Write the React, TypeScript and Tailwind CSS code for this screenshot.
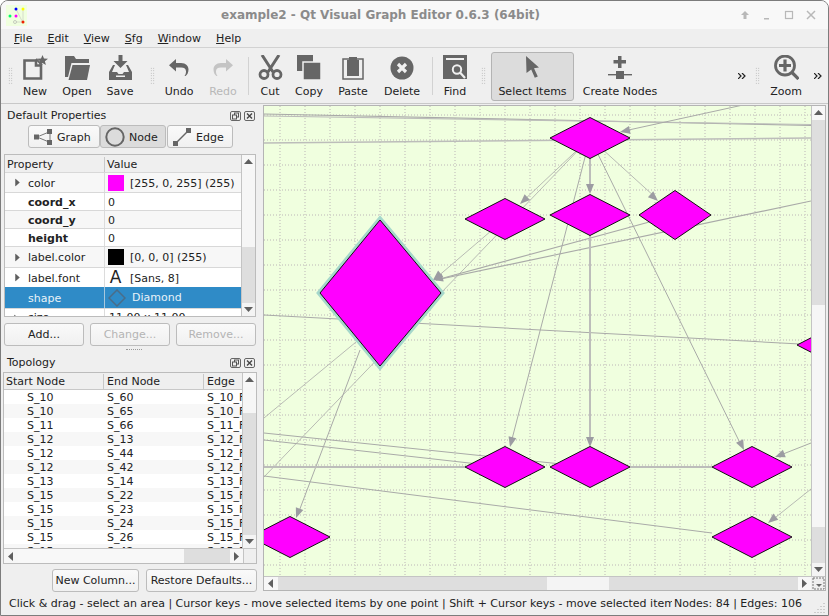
import type { ReactNode } from 'react';

/* toolbar glyphs */
const GREY = '#666666';

function NewIcon() {
  return (
    <svg width="25" height="25" viewBox="0 0 25 25">
      <path d="M1.500 5.500H13v5h5V23.500H1.500z" fill="none" stroke={GREY} strokeWidth="2.600" />
      <path d="M13 4l6 6" stroke={GREY} strokeWidth="2" />
      <path d="M19.500 0l1.500 3.500 4 .2-3.100 2.500 1 3.900-3.400-2.200-3.400 2.200 1-3.900L14 3.700l4-.2z" fill={GREY} />
    </svg>
  );
}

function OpenIcon() {
  return (
    <svg width="25" height="24" viewBox="0 0 25 24">
      <path d="M0 0h9l2 3h13v4H6.500L3 21h-3z" fill={GREY} />
      <path d="M7.500 9H25l-3 15H3.500z" fill={GREY} />
    </svg>
  );
}

function SaveIcon() {
  return (
    <svg width="23" height="25" viewBox="0 0 23 25">
      <path d="M9.500 0h4v6h5l-7 7-7-7h5z" fill={GREY} />
      <path d="M4 10L0 17v8h23v-8l-4-7h-2l3 7h-5l-1.500 2h-4L8 17H3l3-7z" fill={GREY} />
      <rect x="7" y="20.500" width="9" height="1.500" fill="#f0f0f0" />
    </svg>
  );
}

function UndoIcon({ color, flip }: { color: string; flip?: boolean }) {
  return (
    <svg width="20" height="17" viewBox="0 0 20 17" className={`mb-[4px] ${flip ? '-scale-x-100' : ''}`}>
      <path d="M7 0v4h5c5 0 7.500 3 7.500 6.500S18 16 16.500 17h-1c1-1 1.500-3 1.500-4.500C17 10 15.500 8.500 12 8.500H7v4L0 6.200z" fill={color} />
    </svg>
  );
}

function CutIcon() {
  return (
    <svg width="25" height="25" viewBox="0 0 25 25">
      <path d="M4 0l11 17M21 0L10 17" stroke={GREY} strokeWidth="3" fill="none" />
      <circle cx="6" cy="19.500" r="4" stroke={GREY} strokeWidth="2.800" fill="none" />
      <circle cx="19" cy="19.500" r="4" stroke={GREY} strokeWidth="2.800" fill="none" />
    </svg>
  );
}

function CopyIcon() {
  return (
    <svg width="24" height="25" viewBox="0 0 24 25">
      <rect x="0" y="0" width="16" height="16" fill={GREY} />
      <rect x="6" y="7" width="18" height="18" fill={GREY} stroke="#f0f0f0" strokeWidth="1.500" />
    </svg>
  );
}

function PasteIcon() {
  return (
    <svg width="22" height="24" viewBox="0 0 22 24">
      <rect x="1" y="3" width="20" height="20" fill="none" stroke={GREY} strokeWidth="1.500" />
      <path d="M7 1h8v3h2v16H5V4h2z" fill={GREY} />
    </svg>
  );
}

function DeleteIcon() {
  return (
    <svg width="24" height="24" viewBox="0 0 24 24">
      <circle cx="12" cy="12" r="11.500" fill={GREY} />
      <path d="M8 8l8 8M16 8l-8 8" stroke="#f0f0f0" strokeWidth="3.200" />
    </svg>
  );
}

function FindIcon() {
  return (
    <svg width="25" height="25" viewBox="0 0 25 25">
      <path d="M0 0h24v24H0z" fill={GREY} />
      <rect x="3" y="3" width="18" height="2" fill="#f0f0f0" />
      <circle cx="14" cy="14.500" r="4.200" fill="none" stroke="#f0f0f0" strokeWidth="2" />
      <path d="M17 17.500l5 5.500" stroke="#f0f0f0" strokeWidth="2.200" />
    </svg>
  );
}

function CursorIcon() {
  return (
    <svg width="15" height="22" viewBox="0 0 15 22" className="mb-[2px]">
      <path d="M1 0l13 11.500-5 .8 3.800 8.200-3 1.200-3.600-8.200L1.500 17z" fill={GREY} />
    </svg>
  );
}

function CreateNodeIcon() {
  return (
    <svg width="24" height="23" viewBox="0 0 24 23" className="mb-[1px]">
      <path d="M10 0h3.500v4H18v3.500h-4.500V12H10V7.500H5.500V4H10z" fill={GREY} />
      <rect x="0" y="18" width="24" height="1.400" fill={GREY} />
      <rect x="8" y="15" width="8" height="8" fill={GREY} />
    </svg>
  );
}

function ZoomIcon() {
  return (
    <svg width="25" height="25" viewBox="0 0 25 25">
      <circle cx="11" cy="10.500" r="9.500" fill="none" stroke={GREY} strokeWidth="2.800" />
      <path d="M9.400 4.500h3.200v4.400H17v3.200h-4.400v4.400H9.400v-4.400H5V8.900h4.400z" fill={GREY} />
      <path d="M17.500 17l7 7" stroke={GREY} strokeWidth="3.200" />
    </svg>
  );
}

function Handle() {
  return (
    <div className="mx-auto h-[17px] w-[5px] bg-[radial-gradient(#aaaaaa_0.6px,transparent_0.7px)] bg-[length:2.500px_2.500px]" />
  );
}

function Tool({
  label,
  icon,
  className,
  disabled,
  checked,
}: {
  label: string;
  icon: ReactNode;
  className: string;
  disabled?: boolean;
  checked?: boolean;
}) {
  return (
    <div
      className={`mt-[4px] flex h-[49px] shrink-0 flex-col items-center self-start rounded-[3px] ${className} ${
        checked ? 'border border-[#b4b4b4] bg-[#dcdcdc]' : 'border border-transparent'
      }`}
    >
      <div className="flex h-[27px] items-end justify-center">{icon}</div>
      <div className={`mt-[4px] text-[11px] leading-[15px] ${disabled ? 'text-[#b8b8b8]' : 'text-[#222]'}`}>{label}</div>
    </div>
  );
}

function Chevrons({ className }: { className: string }) {
  return (
    <svg width="8" height="6" viewBox="0 0 8 6" className={`shrink-0 ${className}`}>
      <path d="M0 0l3 3-3 3M4 0l3 3-3 3" fill="none" stroke="#222" strokeWidth="1.200" />
    </svg>
  );
}

function Toolbar() {
  return (
    <div className="flex h-[56px] shrink-0 items-center border-b border-[#c8c8c8] bg-[#efefef]">
      <div className="w-[13px] shrink-0 pl-[5px]"><Handle /></div>
      <Tool label="New" icon={<NewIcon />} className="w-[42px]" />
      <Tool label="Open" icon={<OpenIcon />} className="w-[42px]" />
      <Tool label="Save" icon={<SaveIcon />} className="w-[44px]" />
      <div className="w-[16px] shrink-0 pl-[4px]"><Handle /></div>
      <Tool label="Undo" icon={<UndoIcon color={GREY} />} className="w-[42px]" />
      <Tool label="Redo" icon={<UndoIcon color="#c4c4c4" flip />} className="ml-[2px] w-[42px]" disabled />
      <div className="ml-[4px] mr-[1px] h-[38px] w-[1px] shrink-0 bg-[#d2d2d2]" />
      <Tool label="Cut" icon={<CutIcon />} className="w-[40px]" />
      <Tool label="Copy" icon={<CopyIcon />} className="w-[38px]" />
      <Tool label="Paste" icon={<PasteIcon />} className="ml-[2px] w-[46px]" />
      <Tool label="Delete" icon={<DeleteIcon />} className="ml-[2px] w-[48px]" />
      <div className="ml-[6px] mr-[1px] h-[38px] w-[1px] shrink-0 bg-[#d2d2d2]" />
      <Tool label="Find" icon={<FindIcon />} className="w-[42px]" />
      <div className="w-[15px] shrink-0"><Handle /></div>
      <Tool label="Select Items" icon={<CursorIcon />} className="w-[83px]" checked />
      <Tool label="Create Nodes" icon={<CreateNodeIcon />} className="ml-[2px] w-[88px]" />
      <Chevrons className="ml-[74px]" />
      <div className="ml-[7px] w-[9px] shrink-0"><Handle /></div>
      <Tool label="Zoom" icon={<ZoomIcon />} className="w-[48px]" />
      <Chevrons className="ml-[4px]" />
    </div>
  );
}

function Triangle({ dir, className = '' }: { dir: 'up' | 'down' | 'left' | 'right'; className?: string }) {
  const d = {
    up: 'M0 6l4.500-5 4.500 5z',
    down: 'M0 2l4.500 5 4.500-5z',
    left: 'M6 0l-5 4.500 5 4.500z',
    right: 'M2 0l5 4.500-5 4.500z',
  }[dir];
  return (
    <svg width="9" height="9" viewBox="0 0 9 9" className={className}>
      <path d={d} fill="#5f5f5f" />
    </svg>
  );
}

// before / thumb are heights of the groove stretch above the handle and of the handle itself
function VScroll({ before, thumb }: { before: string; thumb: string }) {
  return (
    <div className="flex w-[14px] shrink-0 flex-col border-l border-[#c4c4c4] bg-[#dedede]">
      <div className="flex h-[14px] shrink-0 items-center justify-center bg-[#f7f7f7]"><Triangle dir="up" /></div>
      <div className={`${before} shrink-0`} />
      <div className={`${thumb} shrink-0 bg-[#f6f6f6]`} />
      <div className="min-h-0 flex-1" />
      <div className="flex h-[13px] shrink-0 items-center justify-center bg-[#f4f4f4]"><Triangle dir="down" /></div>
    </div>
  );
}

function DockTitle({ title, className }: { title: string; className: string }) {
  return (
    <div className={`flex shrink-0 items-center justify-between pl-[4px] pr-[8px] ${className}`}>
      <span className="pt-[2px] text-[11px] text-[#222]">{title}</span>
      <div className="flex gap-[3px]">
        <svg width="11" height="10" viewBox="0 0 11 10">
          <rect x="0.500" y="0.500" width="10" height="9" rx="1.500" fill="none" stroke="#666" />
          <rect x="4.500" y="2" width="4" height="4" fill="none" stroke="#555" />
          <rect x="2.500" y="4" width="4" height="4" fill="#efefef" stroke="#555" />
        </svg>
        <svg width="11" height="10" viewBox="0 0 11 10">
          <rect x="0.500" y="0.500" width="10" height="9" rx="1.500" fill="none" stroke="#666" />
          <path d="M3 2.500l5 5M8 2.500l-5 5" stroke="#444" strokeWidth="1.400" />
        </svg>
      </div>
    </div>
  );
}

function PushButton({ label, className, disabled }: { label: string; className: string; disabled?: boolean }) {
  return (
    <div
      className={`flex h-[23px] shrink-0 items-center justify-center rounded-[3px] border border-[#bcbcbc] bg-gradient-to-b from-[#fafafa] to-[#f0f0f0] pt-[2px] text-[11px] ${
        disabled ? 'text-[#b4b4b4]' : 'text-[#222]'
      } ${className}`}
    >
      {label}
    </div>
  );
}

function TabButton({ label, icon, className, checked }: { label: string; icon: ReactNode; className: string; checked?: boolean }) {
  return (
    <div
      className={`flex h-[23px] shrink-0 items-center rounded-[3px] border border-[#bcbcbc] text-[11px] text-[#222] ${
        checked ? 'bg-[#dcdcdc]' : 'bg-gradient-to-b from-[#fafafa] to-[#f0f0f0]'
      } ${className}`}
    >
      {icon}
      <span className="pt-[4px]">{label}</span>
    </div>
  );
}

type PropRow = {
  name: string;
  value?: string;
  swatch?: string;
  caret?: boolean;
  bold?: boolean;
  h: string;
  alt?: boolean;
  glyph?: boolean;
};

const propRows: PropRow[] = [
  { name: 'color', value: '[255, 0, 255] (255)', swatch: 'bg-[#ff00ff]', caret: true, h: 'h-[20px]', alt: true },
  { name: 'coord_x', value: '0', bold: true, h: 'h-[18px]' },
  { name: 'coord_y', value: '0', bold: true, h: 'h-[18px]', alt: true },
  { name: 'height', value: '0', bold: true, h: 'h-[18px]' },
  { name: 'label.color', value: '[0, 0, 0] (255)', swatch: 'bg-black', caret: true, h: 'h-[21px]', alt: true },
  { name: 'label.font', value: '[Sans, 8]', glyph: true, caret: true, h: 'h-[20px]' },
];

function PropertiesTable() {
  return (
    <div className="ml-[1px] flex h-[163px] w-[252px] shrink-0 overflow-hidden border border-[#bcbcbc] bg-white">
      <div className="min-w-0 flex-1 overflow-hidden">
        <div className="flex h-[17px] bg-[#efefef] pt-[2px] text-[11px] leading-[15px] text-[#222]">
          <div className="w-[100px] border-r border-[#c8c8c8] pl-[2px]">Property</div>
          <div className="pl-[2px]">Value</div>
        </div>
        {propRows.map((r) => (
          <div key={r.name} className={`flex ${r.h} items-center border-t border-[#d8d8d8] text-[11px] text-[#222] ${r.alt ? 'bg-[#f7f7f7]' : 'bg-white'}`}>
            <div className="flex w-[100px] shrink-0 items-center self-stretch border-r border-[#dcdcdc]">
              <div className="flex w-[23px] shrink-0 justify-center pl-[1px]">{r.caret && <Triangle dir="right" className="scale-90" />}</div>
              <span className={`pt-[3px] ${r.bold ? 'font-bold' : ''}`}>{r.name}</span>
            </div>
            <div className="flex items-center pl-[3px]">
              {r.swatch && <div className={`mr-[6px] h-[16px] w-[16px] ${r.swatch}`} />}
              {r.glyph && <span className="mr-[7px] w-[15px] text-center text-[17px] leading-[17px]">A</span>}
              <span className="pt-[3px]">{r.value}</span>
            </div>
          </div>
        ))}
        <div className="flex h-[21px] items-center bg-[#2f8bc7] text-[11px] text-[#e8f2f8]">
          <div className="w-[100px] shrink-0 self-stretch border-r border-[#a8c8dd] pl-[23px] leading-[23px]">shape</div>
          <div className="flex items-center pl-[3px]">
            <svg width="18" height="18" viewBox="0 0 18 18">
              <path d="M9 1l8 8-8 8-8-8z" fill="none" stroke="#4a6d88" strokeWidth="1.500" />
            </svg>
            <span className="ml-[6px] pt-[2px]">Diamond</span>
          </div>
        </div>
        <div className="flex h-[20px] items-center border-t border-[#d8d8d8] text-[11px] text-[#222]">
          <div className="flex w-[100px] shrink-0 items-center self-stretch border-r border-[#dcdcdc]">
            <div className="flex w-[23px] shrink-0 justify-center"><Triangle dir="right" className="scale-90" /></div>
            <span>size</span>
          </div>
          <span className="pl-[4px]">11.00 x 11.00</span>
        </div>
      </div>
      <VScroll before="h-[0px]" thumb="h-[78px]" />
    </div>
  );
}

const topologyRows = [
  ['S_10', 'S_60'],
  ['S_10', 'S_65'],
  ['S_11', 'S_66'],
  ['S_12', 'S_13'],
  ['S_12', 'S_44'],
  ['S_12', 'S_42'],
  ['S_13', 'S_14'],
  ['S_15', 'S_22'],
  ['S_15', 'S_23'],
  ['S_15', 'S_24'],
  ['S_15', 'S_26'],
  ['S_15', 'S_42'],
];

function TopologyTable() {
  return (
    <div className="flex h-[192px] w-[254px] shrink-0 flex-col overflow-hidden border border-[#bcbcbc] bg-white">
      <div className="flex h-[175px] shrink-0">
        <div className="min-w-0 flex-1 overflow-hidden">
          <div className="flex h-[17px] border-b border-[#c8c8c8] bg-[#efefef] pt-[1px] text-[11px] leading-[15px] text-[#222]">
            <div className="w-[100px] shrink-0 border-r border-[#c8c8c8] pl-[2px]">Start Node</div>
            <div className="w-[100px] shrink-0 border-r border-[#c8c8c8] pl-[3px]">End Node</div>
            <div className="pl-[3px]">Edge</div>
          </div>
          {topologyRows.map((r, i) => (
            <div key={i} className={`flex h-[14px] pt-[1px] text-[11px] leading-[14px] text-[#222] whitespace-nowrap ${i % 2 ? 'bg-[#f7f7f7]' : 'bg-white'}`}>
              <div className="w-[100px] shrink-0 pl-[23px]">{r[0]}</div>
              <div className="w-[100px] shrink-0 pl-[3px]">{r[1]}</div>
              <div className="pl-[3px]">{r[0]}_F</div>
            </div>
          ))}
        </div>
        <VScroll before="h-[0px]" thumb="h-[26px]" />
      </div>
      <div className="flex h-[15px] shrink-0 border-t border-[#c4c4c4]">
        <div className="flex w-[14px] shrink-0 items-center justify-center bg-[#f7f7f7]"><Triangle dir="left" /></div>
        <div className="w-[166px] shrink-0 bg-[#f8f8f8]" />
        <div className="w-[46px] shrink-0 bg-[#dedede]" />
        <div className="flex w-[13px] shrink-0 items-center justify-center bg-[#f7f7f7]"><Triangle dir="right" /></div>
        <div className="flex-1 border-l border-[#c4c4c4] bg-[#efefef]" />
      </div>
    </div>
  );
}

/* graph drawing, in page coordinates */
const gridXs = Array.from({ length: 22 }, (_, i) => 280 + i * 25);
const gridYs = Array.from({ length: 19 }, (_, i) => 115 + i * 25);

const THIN = '#a9aaa8';
const THICK = '#bcbdba';

const edges: [number, number, number, number, number, string][] = [
  [264, 114, 811, 125.500, 1.200, THIN],
  [264, 116, 811, 124.500, 1.200, THICK],
  [264, 143, 811, 138, 1.600, THICK],
  [743, 105, 624, 131, 1, THIN],
  [590, 138, 522, 202, 0.800, THIN],
  [590, 138, 264, 477, 0.800, THIN],
  [505, 219, 436, 278, 0.800, THIN],
  [675, 215, 436, 280, 1.100, THIN],
  [811, 201, 436, 280, 1.100, THIN],
  [264, 315, 800, 344, 1.100, THIN],
  [590, 138, 590, 190, 2, THICK],
  [590, 235, 590, 443, 2, THICK],
  [590, 138, 511, 443, 1, THIN],
  [590, 138, 742, 447, 1, THIN],
  [590, 138, 655, 197, 0.800, THIN],
  [356, 342, 264, 418, 0.800, THIN],
  [360, 350, 298, 514, 1, THIN],
  [264, 433, 590, 467, 1, THIN],
  [264, 440, 505, 467, 1, THIN],
  [264, 467, 465, 467, 2, THICK],
  [630, 467, 712, 467, 2, THICK],
  [264, 476, 712, 533, 1, THIN],
  [811, 443, 778, 456, 1, THIN],
  [811, 489, 771, 521, 0.800, THIN],
];

const arrows: [number, number, number][] = [
  [620, 132, 168],
  [520, 204, 137],
  [433, 280, 140],
  [433, 280, 166],
  [658, 201, 42],
  [590, 194, 90],
  [590, 447, 90],
  [510, 447, 104],
  [744, 450, 64],
  [296, 518, 111],
  [775, 457, 159],
  [768, 523, 141],
];

const diamonds: [number, number, number, number][] = [
  [590, 138, 40, 20.500],
  [505, 219, 40, 20.500],
  [590, 215, 40, 20.500],
  [675, 215, 36, 24.500],
  [505, 467, 40, 20.500],
  [590, 467, 40, 20.500],
  [752, 467, 40, 20.500],
  [752, 537, 40, 20.500],
  [290, 537, 40, 20.500],
  [837, 345, 40, 20.500],
];

function Graph() {
  return (
    <svg viewBox="264 106 547 470" width="547" height="470" className="block bg-[#f0ffdf]">
      {gridXs.map((x) => (
        <line key={x} x1={x} y1="106" x2={x} y2="576" stroke="#d6dacb" strokeWidth="2" strokeDasharray="1 2" />
      ))}
      {gridYs.map((y) => (
        <line key={y} x1="264" y1={y} x2="811" y2={y} stroke="#d6dacb" strokeWidth="2" strokeDasharray="1 2" />
      ))}
      {edges.map(([x1, y1, x2, y2, w, c], i) => (
        <line key={i} x1={x1} y1={y1} x2={x2} y2={y2} stroke={c} strokeWidth={w} />
      ))}
      {arrows.map(([x, y, a], i) => (
        <path key={i} d="M0 0l-10-4v8z" fill="#9c9ca2" transform={`translate(${x} ${y}) rotate(${a})`} />
      ))}
      {diamonds.map(([x, y, w, h], i) => (
        <path key={i} d={`M${x - w} ${y}L${x} ${y - h}L${x + w} ${y}L${x} ${y + h}z`} fill="#ff00ff" stroke="#111" strokeWidth="1" />
      ))}
      <path d="M380 220L441 293L380 366L320 293z" fill="none" stroke="#a5d8cb" strokeWidth="6" />
      <path d="M380 220L441 293L380 366L320 293z" fill="#ff00ff" stroke="#111" strokeWidth="1" />
    </svg>
  );
}

function AppIcon() {
  return (
    <svg width="21" height="21" viewBox="0 0 21 21" className="shrink-0">
      <rect width="21" height="21" fill="#f0ffdf" />
      <path d="M10 4l7 14M10 17h7M17 4v14" stroke="#cfd3c4" strokeWidth="0.800" fill="none" />
      <circle cx="10" cy="4" r="1.500" fill="#0000ff" />
      <circle cx="17" cy="4" r="1.500" fill="#ffff00" />
      <circle cx="4" cy="11" r="1.500" fill="#00ff66" />
      <circle cx="10" cy="11" r="1.500" fill="#ff00ff" />
      <circle cx="9" cy="17" r="1.500" fill="#f0ffdf" stroke="#aaa" strokeWidth="0.600" />
      <circle cx="17" cy="17" r="1.500" fill="#ee2200" />
    </svg>
  );
}

const menus: [string, string][] = [
  ['F', 'ile'],
  ['E', 'dit'],
  ['V', 'iew'],
  ['S', 'fg'],
  ['W', 'indow'],
  ['H', 'elp'],
];

export default function App() {
  return (
    <div className="h-[616px] w-[829px] overflow-hidden bg-white font-['DejaVu_Sans',sans-serif]">
      <div className="flex h-full flex-col overflow-hidden rounded-t-[8px] border border-[#7c7c7c] bg-[#efefef]">
        {/* Title bar */}
        <div className="flex h-[28px] shrink-0 items-center bg-[#f8f8f8] pl-[5px]">
          <AppIcon />
          <div className="flex-1 pr-[6px] text-center text-[12px] font-bold text-[#8b8b8b]">
            example2 - Qt Visual Graph Editor 0.6.3 (64bit)
          </div>
          <div className="flex items-center gap-[12px] pr-[12px]">
            <svg width="10" height="10" viewBox="0 0 10 10"><path d="M5 1L1 5h2.500v4h3V5H9z" fill="#b8b8b8" /></svg>
            <svg width="10" height="10" viewBox="0 0 10 10"><rect x="2" y="8" width="5" height="1.500" fill="#b8b8b8" /></svg>
            <svg width="10" height="10" viewBox="0 0 10 10"><rect x="1.500" y="1.500" width="7" height="7" fill="none" stroke="#b8b8b8" strokeWidth="1.200" /></svg>
            <svg width="10" height="10" viewBox="0 0 10 10"><path d="M1 1l8 8M9 1l-8 8" stroke="#b8b8b8" strokeWidth="1.500" /></svg>
          </div>
        </div>

        {/* Menu bar */}
        <div className="flex h-[19px] shrink-0 gap-[15px] border-b border-[#d2d2d2] bg-[#efefef] pl-[13px] text-[11px] leading-[19px] text-[#222]">
          {menus.map(([k, rest]) => (
            <span key={k}><span className="underline">{k}</span>{rest}</span>
          ))}
        </div>

        <Toolbar />

        {/* Docks and canvas */}
        <div className="flex min-h-0 flex-1">
          <div className="flex w-[262px] shrink-0 flex-col pl-[2px]">
            <DockTitle title="Default Properties" className="h-[21px] pt-[2px]" />
            <div className="flex h-[24px] shrink-0 pl-[25px]">
              <TabButton
                label="Graph"
                className="w-[72px] gap-[5px] pl-[5px]"
                icon={
                  <svg width="18" height="16" viewBox="0 0 18 16">
                    <path d="M3 8l12-5M3 8l12 5M16 4v8" stroke="#777" strokeWidth="1" fill="none" />
                    <rect x="0" y="5.500" width="5" height="5" fill="#666" />
                    <rect x="13" y="0" width="5" height="5" fill="#666" />
                    <rect x="13" y="11" width="5" height="5" fill="#666" />
                  </svg>
                }
              />
              <TabButton
                label="Node"
                className="w-[66px] gap-[4px] pl-[4px]"
                checked
                icon={
                  <svg width="20" height="20" viewBox="0 0 20 20">
                    <circle cx="10" cy="10" r="8.700" fill="none" stroke="#666" strokeWidth="2" />
                  </svg>
                }
              />
              <TabButton
                label="Edge"
                className="ml-[1px] w-[66px] gap-[5px] pl-[5px]"
                icon={
                  <svg width="18" height="18" viewBox="0 0 18 18">
                    <path d="M3 15L15 3" stroke="#666" strokeWidth="1.400" />
                    <rect x="0" y="13" width="5" height="5" fill="#666" />
                    <rect x="13" y="0" width="5" height="5" fill="#666" />
                  </svg>
                }
              />
            </div>
            <div className="h-[5px] shrink-0" />
            <PropertiesTable />
            <div className="mt-[6px] flex shrink-0 gap-[6px] pl-[1px]">
              <PushButton label="Add..." className="w-[80px]" />
              <PushButton label="Change..." className="w-[80px]" disabled />
              <PushButton label="Remove..." className="w-[80px]" disabled />
            </div>
            <div className="flex h-[6px] shrink-0 items-center justify-center pl-[2px]">
              <div className="h-[1px] w-[16px] border-t border-dotted border-[#999]" />
            </div>
            <DockTitle title="Topology" className="h-[20px] pt-[1px]" />
            <TopologyTable />
            <div className="mt-[5px] flex shrink-0 justify-end gap-[7px] pr-[6px]">
              <PushButton label="New Column..." className="w-[87px]" />
              <PushButton label="Restore Defaults..." className="w-[111px]" />
            </div>
          </div>

          <div className="mt-[1px] flex h-[486px] w-[563px] shrink-0 flex-col border border-[#b4b4b4]">
            <div className="flex min-h-0 flex-1">
              <div className="w-[547px] shrink-0 overflow-hidden"><Graph /></div>
              <VScroll before="h-[185px]" thumb="h-[222px]" />
            </div>
            <div className="flex h-[14px] shrink-0 border-t border-[#c4c4c4] bg-[#dedede]">
              <div className="flex w-[14px] shrink-0 items-center justify-center bg-[#f7f7f7]"><Triangle dir="left" /></div>
              <div className="w-[269px] shrink-0" />
              <div className="w-[62px] shrink-0 bg-[#f4f4f4]" />
              <div className="flex-1" />
              <div className="flex w-[13px] shrink-0 items-center justify-center bg-[#f7f7f7]"><Triangle dir="right" /></div>
              <div className="flex w-[14px] shrink-0 items-center justify-center bg-[#efefef]">
                <svg width="13" height="13" viewBox="0 0 13 13">
                  <rect x="1" y="1" width="11" height="11" fill="none" stroke="#777" strokeDasharray="2 1" />
                  <path d="M4 7h6L7 10z" fill="#666" />
                </svg>
              </div>
            </div>
          </div>
        </div>

        {/* Status bar */}
        <div className="flex h-[21px] shrink-0 items-center text-[11px] text-[#222]">
          <div className="w-[671px] shrink-0 overflow-hidden whitespace-nowrap pl-[8px]">
            Click &amp; drag - select an area | Cursor keys - move selected items by one point | Shift + Cursor keys - move selected items by one point
          </div>
          <div className="ml-[2px] whitespace-nowrap">Nodes: 84 | Edges: 106</div>
          <svg width="12" height="12" viewBox="0 0 12 12" className="ml-auto mr-[2px] mt-[6px]">
            <path d="M10 1v1M7 4v1M10 4v1M4 7v1M7 7v1M10 7v1M1 10v1M4 10v1M7 10v1M10 10v1" stroke="#aaaaaa" strokeWidth="1" />
          </svg>
        </div>
      </div>
    </div>
  );
}
